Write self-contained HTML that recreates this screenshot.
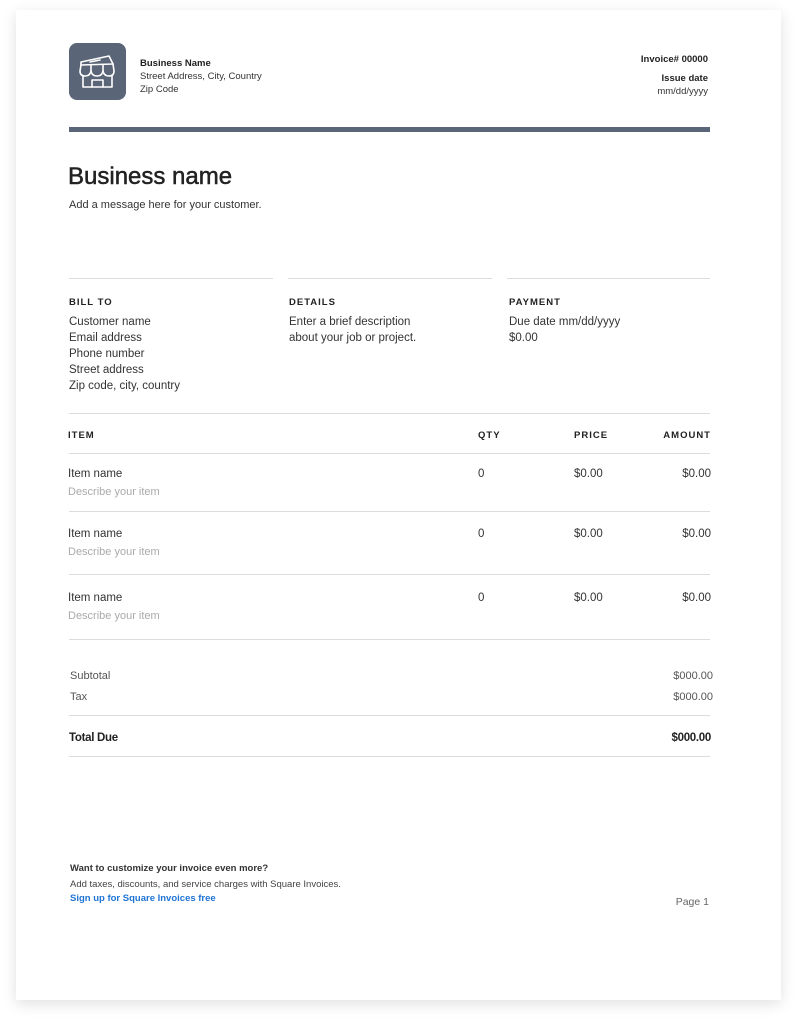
<!DOCTYPE html>
<html><head><meta charset="utf-8"><style>
*{margin:0;padding:0;box-sizing:border-box}
body{width:797px;height:1024px;background:#fff;font-family:"Liberation Sans",sans-serif;color:#222;position:relative;overflow:hidden}
.page{position:absolute;left:16px;top:10px;width:765px;height:990px;background:#fff;box-shadow:0 4px 14px rgba(0,0,0,0.12)}
.t{position:absolute;white-space:nowrap;line-height:1;transform:translateY(2px)}
.r{text-align:right}
.ln{position:absolute;height:1px;background:#dcdcdc}
.h{font-size:9.5px;font-weight:bold;letter-spacing:1px;color:#222}
.b{font-size:11.5px;color:#333}
.g{font-size:11px;color:#aaa}
</style></head><body>
<div class="page"></div>
<div style="position:absolute;left:69px;top:43px;width:57px;height:57px;border-radius:8px;background:#5a6577"></div>
<svg style="position:absolute;left:69px;top:43px" width="57" height="57" viewBox="0 0 57 57" fill="none" stroke="#fff" stroke-width="1.6" stroke-linejoin="round" stroke-linecap="round">
<path d="M12 19 L40 13 L44 21 L12 22 Z"/>
<path d="M12 22 L11 28 Q11 33 16 33 Q21 33 22 28 Q23 33 28 33 Q33 33 34 28 Q35 33 40 33 Q45 33 45 28 L44 21"/>
<path d="M22 22 L22 28 M34 22 L34 28"/>
<path d="M14 33 L14 44 L43 44 L43 33"/>
<path d="M23 44 L23 37 L34 37 L34 44"/>
<path d="M21 19 L31 17"/>
</svg>
<div class="t" style="left:140px;top:57px;font-size:9.5px;font-weight:bold">Business Name</div>
<div class="t" style="left:140px;top:70px;font-size:9.5px;color:#333">Street Address, City, Country</div>
<div class="t" style="left:140px;top:83px;font-size:9.5px;color:#333">Zip Code</div>
<div class="t r" style="right:89px;top:53px;font-size:9.5px;font-weight:bold">Invoice# 00000</div>
<div class="t r" style="right:89px;top:72px;font-size:9.5px;font-weight:bold">Issue date</div>
<div class="t r" style="right:89px;top:85px;font-size:9.5px;color:#333">mm/dd/yyyy</div>
<div style="position:absolute;left:69px;top:127px;width:641px;height:5px;background:#5a6577"></div>
<div class="t" style="left:68px;top:163px;font-size:24px;color:#222;-webkit-text-stroke:0.5px #222">Business name</div>
<div class="t" style="left:69px;top:198px;font-size:11px;color:#333">Add a message here for your customer.</div>

<div class="ln" style="left:69px;top:278px;width:204px"></div>
<div class="ln" style="left:288px;top:278px;width:204px"></div>
<div class="ln" style="left:507px;top:278px;width:203px"></div>
<div class="t h" style="left:69px;top:296px">BILL TO</div>
<div class="t h" style="left:289px;top:296px">DETAILS</div>
<div class="t h" style="left:509px;top:296px">PAYMENT</div>
<div class="t b" style="left:69px;top:315px">Customer name</div>
<div class="t b" style="left:69px;top:331px">Email address</div>
<div class="t b" style="left:69px;top:347px">Phone number</div>
<div class="t b" style="left:69px;top:363px">Street address</div>
<div class="t b" style="left:69px;top:379px">Zip code, city, country</div>
<div class="t b" style="left:289px;top:315px">Enter a brief description</div>
<div class="t b" style="left:289px;top:331px">about your job or project.</div>
<div class="t b" style="left:509px;top:315px">Due date mm/dd/yyyy</div>
<div class="t b" style="left:509px;top:331px">$0.00</div>

<div class="ln" style="left:69px;top:413px;width:641px"></div>
<div class="t h" style="left:68px;top:429px">ITEM</div>
<div class="t h" style="left:478px;top:429px">QTY</div>
<div class="t h" style="left:574px;top:429px">PRICE</div>
<div class="t h r" style="right:86px;top:429px">AMOUNT</div>
<div class="ln" style="left:69px;top:453px;width:641px"></div>

<div class="t b" style="left:68px;top:467px">Item name</div>
<div class="t g" style="left:68px;top:485px">Describe your item</div>
<div class="t b" style="left:478px;top:467px">0</div>
<div class="t b" style="left:574px;top:467px">$0.00</div>
<div class="t b r" style="right:86px;top:467px">$0.00</div>
<div class="ln" style="left:69px;top:511px;width:641px"></div>

<div class="t b" style="left:68px;top:527px">Item name</div>
<div class="t g" style="left:68px;top:545px">Describe your item</div>
<div class="t b" style="left:478px;top:527px">0</div>
<div class="t b" style="left:574px;top:527px">$0.00</div>
<div class="t b r" style="right:86px;top:527px">$0.00</div>
<div class="ln" style="left:69px;top:574px;width:641px"></div>

<div class="t b" style="left:68px;top:591px">Item name</div>
<div class="t g" style="left:68px;top:609px">Describe your item</div>
<div class="t b" style="left:478px;top:591px">0</div>
<div class="t b" style="left:574px;top:591px">$0.00</div>
<div class="t b r" style="right:86px;top:591px">$0.00</div>
<div class="ln" style="left:69px;top:639px;width:641px"></div>

<div class="t" style="left:70px;top:669px;font-size:11px;color:#555">Subtotal</div>
<div class="t r" style="right:84px;top:669px;font-size:11px;color:#555">$000.00</div>
<div class="t" style="left:70px;top:690px;font-size:11px;color:#555">Tax</div>
<div class="t r" style="right:84px;top:690px;font-size:11px;color:#555">$000.00</div>
<div class="ln" style="left:69px;top:715px;width:641px"></div>
<div class="t" style="left:69px;top:731px;font-size:11.5px;font-weight:bold;letter-spacing:-0.3px">Total Due</div>
<div class="t r" style="right:86px;top:731px;font-size:11.5px;font-weight:bold;letter-spacing:-0.3px">$000.00</div>
<div class="ln" style="left:69px;top:756px;width:641px"></div>

<div class="t" style="left:70px;top:862px;font-size:9.5px;font-weight:bold;color:#333">Want to customize your invoice even more?</div>
<div class="t" style="left:70px;top:878px;font-size:9.5px;color:#444">Add taxes, discounts, and service charges with Square Invoices.</div>
<div class="t" style="left:70px;top:892px;font-size:9.5px;font-weight:bold;color:#1f74d6">Sign up for Square Invoices free</div>
<div class="t r" style="right:88px;top:895px;font-size:10.5px;color:#666">Page 1</div>
</body></html>
